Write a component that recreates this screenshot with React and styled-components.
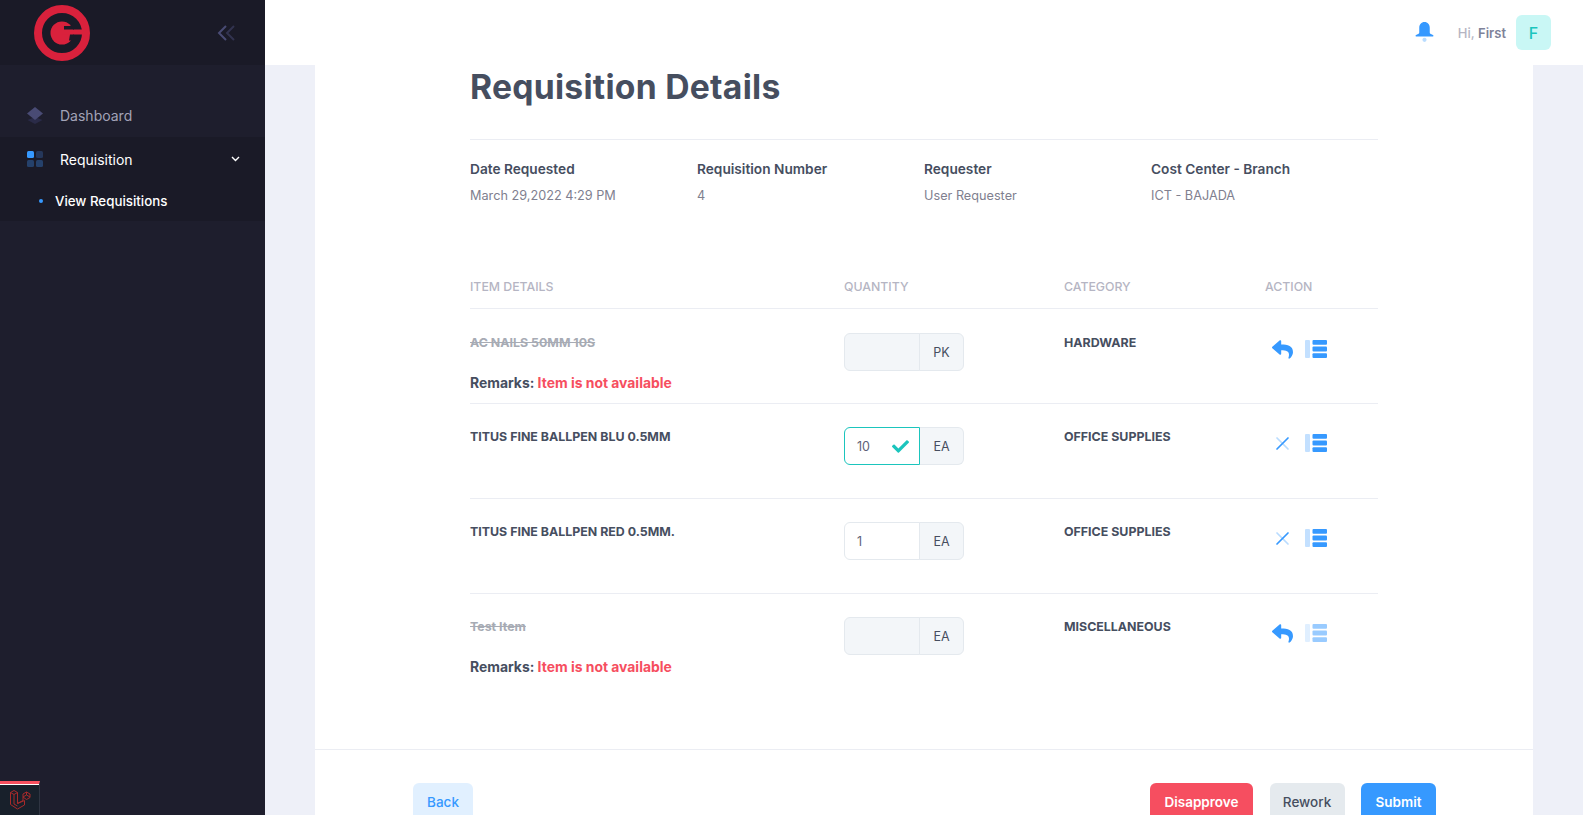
import React from "react";
import styled, { createGlobalStyle } from "styled-components";
import { FaCheck, FaReply } from "react-icons/fa";

const GlobalStyle = createGlobalStyle`
  html, body { margin: 0; height: 100%; overflow: hidden; }
  body { font-family: "Inter", "Open Sans", sans-serif; background: #eef0f8; color: #464e5f; }
`;

const Layout = styled.div`
  display: flex;
  width: 100%;
  height: 815px;
  overflow: hidden;
`;

const Sidebar = styled.aside`
  position: relative;
  flex: 0 0 265px;
  background: #1e1e2d;
  display: flex;
  flex-direction: column;
`;

const Brand = styled.div`
  height: 65px;
  background: #1a1a27;
  display: flex;
  align-items: center;
  justify-content: space-between;
  padding: 0 30px 0 34px;
`;

const Menu = styled.nav`
  padding-top: 28px;
  font-size: 14px;
`;

const MenuItem = styled.div`
  height: 44px;
  display: flex;
  align-items: center;
  padding: 0 25px 0 27px;
  gap: 17px;
  background: ${(p) => (p.$active ? "#1a1a27" : "transparent")};
  color: ${(p) => (p.$active ? "#ffffff" : "#a2a3b7")};
  span { flex: 1; }
`;

const SubMenu = styled.div`
  background: #1a1a27;
  height: 40px;
  display: flex;
  align-items: center;
  padding-left: 39px;
  gap: 12px;
  color: #fff;
  font-size: 13.3px;
  font-weight: 500;
`;

const Bullet = styled.i`
  width: 4px;
  height: 4px;
  border-radius: 50%;
  background: #3699ff;
`;

const DebugBar = styled.div`
  position: absolute;
  left: 0;
  bottom: 0;
  width: 40px;
  height: 34px;
  box-sizing: border-box;
  background: #18202b;
  border-top: 3px solid #f9505f;
  border-right: 1px solid #2f3542;
  box-shadow: inset 0 1px 0 #fff;
  display: flex;
  align-items: center;
  justify-content: center;
`;

const Main = styled.main`
  flex: 1;
  min-width: 0;
  display: flex;
  flex-direction: column;
`;

const Topbar = styled.header`
  flex: 0 0 65px;
  background: #fff;
  display: flex;
  align-items: center;
  justify-content: flex-end;
  padding-right: 32px;
  font-size: 13px;
`;

const Bell = styled.div`
  display: flex;
  margin-right: 24px;
`;

const Greeting = styled.div`
  color: #b5b5c3;
  font-weight: 500;
  margin-right: 10px;
  b { color: #7e8299; font-weight: 600; }
`;

const Avatar = styled.div`
  width: 35px;
  height: 35px;
  border-radius: 6px;
  background: #c9f7f5;
  color: #1bc5bd;
  display: flex;
  align-items: center;
  justify-content: center;
  font-size: 16px;
  font-weight: 500;
`;

const Content = styled.div`
  flex: 1;
  padding: 0 50px;
  min-height: 0;
`;

const Card = styled.section`
  background: #fff;
  height: 100%;
  display: flex;
  flex-direction: column;
`;

const Body = styled.div`
  padding: 0 155px;
  flex: 0 0 684px;
  box-sizing: border-box;
`;

const Title = styled.h1`
  margin: 0;
  height: 75px;
  box-sizing: border-box;
  font-size: 33.7px;
  line-height: 44px;
  letter-spacing: 0.25px;
  font-weight: 700;
  color: #464e5f;
  border-bottom: 1px solid #ebedf3;
`;

const Info = styled.div`
  display: grid;
  grid-template-columns: repeat(4, 227px);
  padding-top: 19px;
  height: 89px;
`;

const InfoLabel = styled.div`
  font-size: 13.7px;
  font-weight: 600;
  line-height: 20px;
  color: #464e5f;
`;

const InfoValue = styled.div`
  font-size: 12.7px;
  line-height: 20px;
  margin-top: 7px;
  color: #80808f;
`;

const Row = styled.div`
  display: grid;
  grid-template-columns: 374px 220px 201px 1fr;
  border-bottom: ${(p) => (p.$last ? "none" : "1px solid #ebedf3")};
  height: ${(p) => (p.$first ? 94 : 95)}px;
  box-sizing: border-box;
`;

const HeadRow = styled(Row)`
  height: 32px;
  margin-top: 29px;
  padding-bottom: 1px;
  margin-bottom: 1px;
  align-items: start;
  font-size: 12.3px;
  line-height: 20px;
  font-weight: 500;
  color: #b5b5c3;
`;

const Cell = styled.div`
  padding-top: 23px;
`;

const ItemName = styled.div`
  font-size: 12.4px;
  line-height: 20px;
  font-weight: 700;
  color: ${(p) => (p.$off ? "#a7abb4" : "#464e5f")};
  text-decoration: ${(p) => (p.$off ? "line-through" : "none")};
`;

const Remarks = styled.div`
  margin-top: 20px;
  font-size: 13.9px;
  line-height: 20px;
  font-weight: 700;
  color: #464e5f;
  em { font-style: normal; color: #f64e60; }
`;

const Category = styled.div`
  font-size: 12.4px;
  line-height: 20px;
  font-weight: 700;
  color: #464e5f;
`;

const QtyGroup = styled.div`
  display: flex;
  width: 120px;
  height: 38px;
  font-size: 12.5px;
  color: #464e5f;
`;

const QtyInput = styled.div`
  flex: 0 0 76px;
  box-sizing: border-box;
  display: flex;
  align-items: center;
  justify-content: space-between;
  padding: 0 10px 0 12px;
  border: 1px solid ${(p) => (p.$valid ? "#1bc5bd" : "#e4e9ee")};
  border-radius: 6px 0 0 6px;
  background: ${(p) => (p.$disabled ? "#f3f6f9" : "#fff")};
  color: #5e6278;
`;

const Unit = styled.div`
  flex: 1;
  display: flex;
  align-items: center;
  justify-content: center;
  background: #f3f6f9;
  border: 1px solid #e4e9ee;
  border-left: ${(p) => (p.$valid ? "none" : "1px solid #e4e9ee")};
  margin-left: ${(p) => (p.$valid ? "0" : "-1px")};
  border-radius: 0 6px 6px 0;
`;

const Actions = styled.div`
  display: flex;
  align-items: center;
  height: 30px;
  margin-top: 1px;
  color: #3699ff;
`;

const ActionSlot = styled.div`
  width: 34px;
  margin-right: 6px;
  display: flex;
  justify-content: center;
`;

const Footer = styled.div`
  border-top: 1px solid #ebedf3;
  padding: 33px 97px 0 98px;
  display: flex;
  align-items: flex-start;
  justify-content: space-between;
`;

const Buttons = styled.div`
  display: flex;
  gap: 16.5px;
`;

const Button = styled.button`
  height: 37px;
  min-width: ${(p) => p.$w}px;
  padding: 0 12px;
  border: none;
  border-radius: 6px;
  font-family: inherit;
  font-size: 13.5px;
  font-weight: ${(p) => (p.$plain ? 500 : 600)};
  background: ${(p) => p.$bg};
  color: ${(p) => p.$fg};
`;

function Logo() {
  return (
    <svg width="56" height="56" viewBox="0 0 56 56">
      <circle cx="28" cy="28" r="24" fill="none" stroke="#d9213c" strokeWidth="8" />
      <circle cx="28" cy="28" r="11.5" fill="#d9213c" />
      <rect x="28" y="24.500" width="20" height="5" fill="#d9213c" />
      <path d="M30 24.500V21h6l4-3v6.500z" fill="#1a1a27" />
      <path d="M36 29.500h4v6h-5z" fill="#1a1a27" />
    </svg>
  );
}

function Collapse() {
  return (
    <svg width="18" height="16" viewBox="0 0 18 16" fill="none" strokeWidth="2">
      <path d="M9 1 2 8l7 7" stroke="#494b74" />
      <path d="M17 1l-7 7 7 7" stroke="#32334f" />
    </svg>
  );
}

function DashIcon() {
  return (
    <svg width="16" height="17" viewBox="0 0 16 17">
      <path d="M8 10 .5 13 8 17l7.500-4z" fill="#32345a" opacity=".6" />
      <path d="M8 0l8 6.500L8 13 0 6.500z" fill="#494b74" />
    </svg>
  );
}

function GridIcon() {
  return (
    <svg width="16" height="16" viewBox="0 0 16 16">
      <rect width="7" height="7" rx="1.500" fill="#3699ff" />
      <rect x="9" width="7" height="7" rx="1.500" fill="#25375a" />
      <rect y="9" width="7" height="7" rx="1.500" fill="#25416b" />
      <rect x="9" y="9" width="7" height="7" rx="1.500" fill="#25416b" />
    </svg>
  );
}

function ChevronIcon() {
  return (
    <svg width="9" height="6" viewBox="0 0 9 6" fill="none" stroke="#fff" strokeWidth="1.400">
      <path d="M1 1l3.500 3.500L8 1" />
    </svg>
  );
}

function BellIcon() {
  return (
    <svg width="19" height="21" viewBox="0 0 18 20">
      <path
        d="M9 0c3 0 5 2.300 5 5.500V10c0 1 .8 1.500 2 1.800.8.200 1.500.5 1.500 1.200s-.6.800-1.300.8H1.800C1.100 13.800.500 13.600.500 13s.7-1 1.500-1.200C3.200 11.500 4 11 4 10V5.500C4 2.300 6 0 9 0z"
        fill="#3699ff"
      />
      <circle cx="9" cy="17" r="2" fill="#b9dcff" />
    </svg>
  );
}

function CrossIcon() {
  return (
    <svg width="15" height="15" viewBox="0 0 15 15" strokeWidth="1.700" strokeLinecap="round">
      <path d="M2 2l11 11" stroke="#b9dcff" />
      <path d="M13 2 2 13" stroke="#3699ff" />
    </svg>
  );
}

function ListIcon({ faded }) {
  return (
    <svg width="22" height="18" viewBox="0 0 22 18" opacity={faded ? 0.5 : 1}>
      <rect width="5" height="18" rx="1" fill="#c3e0ff" />
      <rect x="7.500" y="0" width="14.500" height="4.800" rx="1" fill="#3699ff" />
      <rect x="7.500" y="6.600" width="14.500" height="4.800" rx="1" fill="#3699ff" />
      <rect x="7.500" y="13.200" width="14.500" height="4.800" rx="1" fill="#3699ff" />
    </svg>
  );
}

function LaravelIcon() {
  return (
    <svg width="22" height="22" viewBox="0 0 22 22" fill="none" stroke="#a82a2a" strokeWidth="1">
      <path d="M1.500 3.500 5 1.500l3.500 2v11l5.500-3V8" />
      <path d="M1.500 3.500v12l7 4.500 7-4V11.500l-7 3" />
      <path d="M1.500 3.500 5 5.500l3.500-2M5 5.500v9.500l3.500 2" />
      <path d="M14 8V5l3.500-2 3.500 2v3.500l-3.500 2-3.500-2.500 3.500-2 3.500 2M17.500 6V3" />
    </svg>
  );
}

const rows = [
  { name: "AC NAILS 50MM 10S", unit: "PK", category: "HARDWARE", off: true, first: true },
  { name: "TITUS FINE BALLPEN BLU 0.5MM", unit: "EA", category: "OFFICE SUPPLIES", qty: "10", valid: true },
  { name: "TITUS FINE BALLPEN RED 0.5MM.", unit: "EA", category: "OFFICE SUPPLIES", qty: "1" },
  { name: "Test Item", unit: "EA", category: "MISCELLANEOUS", off: true, fadedList: true, last: true },
];

export default function App() {
  return (
    <>
      <GlobalStyle />
      <Layout>
        <Sidebar>
          <Brand>
            <Logo />
            <Collapse />
          </Brand>
          <Menu>
            <MenuItem>
              <DashIcon />
              <span>Dashboard</span>
            </MenuItem>
            <MenuItem $active>
              <GridIcon />
              <span>Requisition</span>
              <ChevronIcon />
            </MenuItem>
            <SubMenu>
              <Bullet />
              View Requisitions
            </SubMenu>
          </Menu>
          <DebugBar>
            <LaravelIcon />
          </DebugBar>
        </Sidebar>
        <Main>
          <Topbar>
            <Bell>
              <BellIcon />
            </Bell>
            <Greeting>
              Hi, <b>First</b>
            </Greeting>
            <Avatar>F</Avatar>
          </Topbar>
          <Content>
            <Card>
              <Body>
                <Title>Requisition Details</Title>
                <Info>
                  <div>
                    <InfoLabel>Date Requested</InfoLabel>
                    <InfoValue>March 29,2022 4:29 PM</InfoValue>
                  </div>
                  <div>
                    <InfoLabel>Requisition Number</InfoLabel>
                    <InfoValue>4</InfoValue>
                  </div>
                  <div>
                    <InfoLabel>Requester</InfoLabel>
                    <InfoValue>User Requester</InfoValue>
                  </div>
                  <div>
                    <InfoLabel>Cost Center - Branch</InfoLabel>
                    <InfoValue>ICT - BAJADA</InfoValue>
                  </div>
                </Info>
                <HeadRow>
                  <div>ITEM DETAILS</div>
                  <div>QUANTITY</div>
                  <div>CATEGORY</div>
                  <div>ACTION</div>
                </HeadRow>
                {rows.map((r) => (
                  <Row key={r.name} $first={r.first} $last={r.last}>
                    <Cell>
                      <ItemName $off={r.off}>{r.name}</ItemName>
                      {r.off && (
                        <Remarks>
                          Remarks: <em>Item is not available</em>
                        </Remarks>
                      )}
                    </Cell>
                    <Cell>
                      <QtyGroup>
                        <QtyInput $disabled={r.off} $valid={r.valid}>
                          {r.qty}
                          {r.valid && <FaCheck size={17} color="#1bc5bd" />}
                        </QtyInput>
                        <Unit $valid={r.valid}>{r.unit}</Unit>
                      </QtyGroup>
                    </Cell>
                    <Cell>
                      <Category>{r.category}</Category>
                    </Cell>
                    <Cell>
                      <Actions>
                        <ActionSlot>{r.off ? <FaReply size={21} /> : <CrossIcon />}</ActionSlot>
                        <ListIcon faded={r.fadedList} />
                      </Actions>
                    </Cell>
                  </Row>
                ))}
              </Body>
              <Footer>
                <Button $w={60} $bg="#e1f0ff" $fg="#3699ff" $plain>Back</Button>
                <Buttons>
                  <Button $w={103} $bg="#f64e60" $fg="#fff">Disapprove</Button>
                  <Button $w={75} $bg="#e5eaee" $fg="#464e5f" $plain>Rework</Button>
                  <Button $w={75} $bg="#3699ff" $fg="#fff">Submit</Button>
                </Buttons>
              </Footer>
            </Card>
          </Content>
        </Main>
      </Layout>
    </>
  );
}
